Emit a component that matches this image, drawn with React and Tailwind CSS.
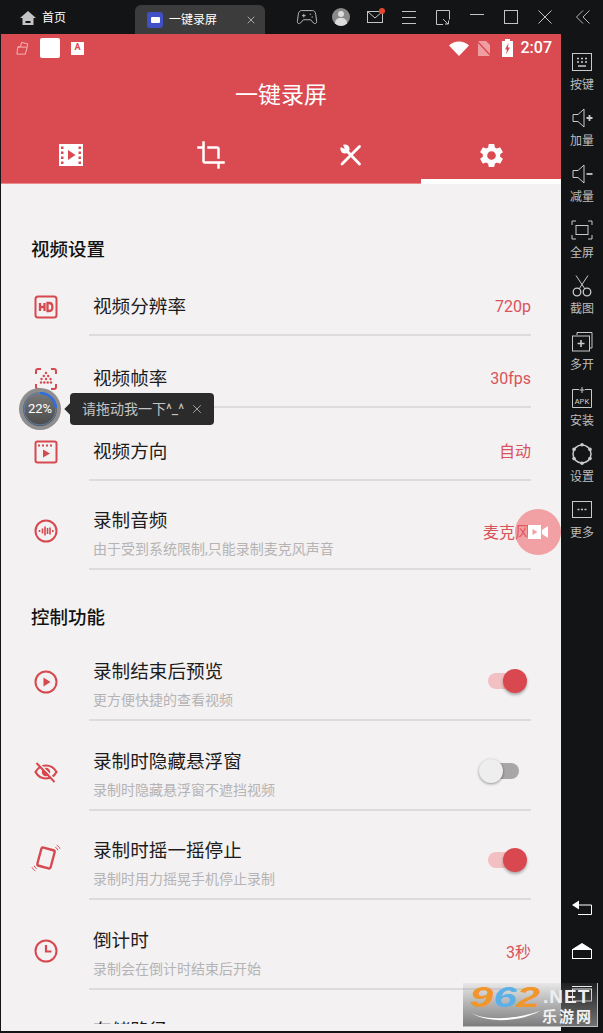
import React from "react";
import { X } from "lucide-react";

const CJK = "font-['Roboto','Noto_Sans_CJK_SC',sans-serif]";

// ── Red row icons ──────────────────────────────────────────────
const Svg = ({ children, className = "w-6 h-6" }) => (
  <svg viewBox="0 0 24 24" fill="none" stroke="#d6494f" strokeWidth="2" className={className}>
    {children}
  </svg>
);

const HdIcon = () => (
  <Svg>
    <rect x="1.500" y="1.500" width="21" height="21" rx="2.500" />
    <path d="M6 8v8M10.500 8v8M6 12h4.500" strokeWidth="2.300" />
    <path d="M13.500 8v8h1.700c2 0 3.200-1.500 3.200-4s-1.200-4-3.200-4z" strokeWidth="2.300" />
  </Svg>
);

const FpsIcon = () => (
  <Svg>
    <path d="M2 7V4a2 2 0 0 1 2-2h3M17 2h3a2 2 0 0 1 2 2v3M22 17v3a2 2 0 0 1-2 2h-3M7 22H4a2 2 0 0 1-2-2v-3" />
    <g fill="#d6494f" stroke="none">
      <circle cx="12" cy="6" r="1.200" /><circle cx="9.800" cy="9" r="1.200" /><circle cx="14.200" cy="9" r="1.200" />
      <circle cx="7.500" cy="12" r="1.200" /><circle cx="12" cy="12" r="1.200" /><circle cx="16.500" cy="12" r="1.200" />
      <circle cx="7" cy="15.500" r="1.200" /><circle cx="10.300" cy="15.500" r="1.200" /><circle cx="13.700" cy="15.500" r="1.200" /><circle cx="17" cy="15.500" r="1.200" />
    </g>
  </Svg>
);

const OrientIcon = () => (
  <Svg>
    <rect x="1.500" y="1.500" width="21" height="21" rx="2" />
    <path d="M4 5.500h16" strokeDasharray="2 2" strokeWidth="1.800" />
    <path d="M9 9.500l7 4-7 4z" fill="#d6494f" stroke="none" />
  </Svg>
);

const AudioIcon = () => (
  <Svg>
    <circle cx="12" cy="12" r="10.500" />
    <path d="M5.500 11v2M8.500 9.500v5M11 7.500v9M13.500 9v6M16 8.500v7M18.800 11v2" strokeWidth="1.600" />
  </Svg>
);

const PlayIcon = () => (
  <Svg>
    <circle cx="12" cy="12" r="10.500" />
    <path d="M9.500 7.500l7 4.500-7 4.500z" fill="#d6494f" stroke="none" />
  </Svg>
);

const EyeOffIcon = () => (
  <Svg>
    <path d="M1.500 12C4 7.500 7.500 5.500 12 5.500s8 2 10.500 6.500c-2.500 4.500-6 6.500-10.500 6.500S4 16.500 1.500 12z" strokeWidth="2.200" />
    <circle cx="12" cy="12" r="4.200" fill="#d6494f" stroke="none" />
    <path d="M3.800 2.200l18 19" strokeWidth="1.800" stroke="#f3f1f2" />
    <path d="M2.500 3l18 19" strokeWidth="2" />
  </Svg>
);

const ShakeIcon = () => (
  <Svg className="w-[30px] h-[30px]">
    <rect x="6.500" y="4.500" width="11" height="15" rx="1.500" transform="rotate(15 12 12)" strokeWidth="1.900" />
    <path d="M19.500 3.500c1 .4 1.700 1.200 2 2.300M20.500 1.800c1.300.5 2.200 1.500 2.700 2.800" strokeWidth=".8" />
    <path d="M4.500 20.500c-1-.4-1.700-1.200-2-2.300M3.500 22.200c-1.300-.5-2.200-1.500-2.700-2.800" strokeWidth=".8" />
  </Svg>
);

const ClockIcon = () => (
  <Svg>
    <circle cx="12" cy="12" r="10.500" />
    <path d="M12 6v6.500h5.500" strokeWidth="2.200" />
  </Svg>
);

// ── Header tab icons ───────────────────────────────────────────
const FilmTab = () => (
  <svg viewBox="0 0 26 24" className="w-[26px] h-[24px]" fill="#fff">
    <path
      fillRule="evenodd"
      d="M1 1h24v22H1zM3 3.500v2.500h2.500V3.500zM3 8.500V11h2.500V8.500zM3 13.500V16h2.500v-2.500zM3 18.500V21h2.500v-2.500zM20.500 3.500V6H23V3.500zM20.500 8.500V11H23V8.500zM20.500 13.500V16H23v-2.500zM20.500 18.500V21H23v-2.500zM10 7v10l7.500-5z"
    />
  </svg>
);

const CropTab = () => (
  <svg viewBox="0 0 24 24" className="w-[30px] h-[30px]" fill="#fff">
    <path d="M17 15h2V7c0-1.100-.9-2-2-2H9v2h8v8zM7 17V1H5v4H1v2h4v10c0 1.100.9 2 2 2h10v4h2v-4h4v-2H7z" />
  </svg>
);

const ToolsTab = () => (
  <svg viewBox="0 0 24 24" className="w-[24px] h-[24px]" fill="none" stroke="#fff">
    <path d="M20.500 3.500L3 21" strokeWidth="2.800" strokeLinecap="round" />
    <path d="M6.500 6.500L20.500 21" strokeWidth="2.800" strokeLinecap="round" />
    <circle cx="6" cy="6" r="4.600" fill="#fff" stroke="none" />
    <path d="M5.800 6L3.500.5.500 3.500z" fill="#d94a51" stroke="none" />
  </svg>
);

const GearTab = () => (
  <svg viewBox="0 0 24 24" className="w-[29px] h-[29px]" fill="#fff">
    <path d="M19.140 12.940c.04-.3.06-.61.06-.94 0-.32-.02-.64-.07-.94l2.030-1.580c.18-.14.23-.41.12-.61l-1.920-3.320c-.12-.22-.37-.29-.59-.22l-2.390.96c-.5-.38-1.030-.7-1.620-.94l-.36-2.540c-.04-.24-.24-.41-.48-.41h-3.840c-.24 0-.43.17-.47.41l-.36 2.540c-.59.24-1.130.57-1.620.94l-2.390-.96c-.22-.08-.47 0-.59.22L2.740 8.870c-.12.21-.08.47.12.61l2.030 1.580c-.05.3-.09.63-.09.94s.02.64.07.94l-2.030 1.580c-.18.14-.23.41-.12.61l1.920 3.320c.12.22.37.29.59.22l2.390-.96c.5.38 1.030.7 1.620.94l.36 2.540c.05.24.24.41.48.41h3.840c.24 0 .44-.17.47-.41l.36-2.540c.59-.24 1.130-.56 1.620-.94l2.390.96c.22.08.47 0 .59-.22l1.920-3.320c.12-.22.07-.47-.12-.61l-2.010-1.580zM12 15.600c-1.980 0-3.600-1.620-3.600-3.600s1.620-3.600 3.600-3.600 3.600 1.620 3.600 3.600-1.620 3.600-3.600 3.600z" />
  </svg>
);

// ── Emulator sidebar icons ─────────────────────────────────────
const SideSvg = ({ children }) => (
  <svg viewBox="0 0 24 24" fill="none" stroke="#c9c9c9" strokeWidth="1" className="w-6 h-6">
    {children}
  </svg>
);

const sideItems = [
  {
    label: "按键",
    icon: (
      <>
        <rect x="2.500" y="3.500" width="19" height="17" />
        <path d="M7 8.500h2M11 8.500h2M15 8.500h2M7 12h2M11 12h2M15 12h2M8 16h8" strokeWidth="1.500" />
      </>
    ),
  },
  {
    label: "加量",
    icon: (
      <>
        <path d="M3 8.500h5L14 3v18l-6-5.500H3z" />
        <path d="M16.500 12h6M19.500 9v6" strokeWidth="1.800" />
      </>
    ),
  },
  {
    label: "减量",
    icon: (
      <>
        <path d="M3 8.500h5L14 3v18l-6-5.500H3z" />
        <path d="M16.500 12h6" strokeWidth="1.800" />
      </>
    ),
  },
  {
    label: "全屏",
    icon: (
      <>
        <path d="M2 7V3h4M18 3h4v4M22 17v4h-4M6 21H2v-4" />
        <rect x="6" y="7.500" width="12" height="9" />
      </>
    ),
  },
  {
    label: "截图",
    icon: (
      <>
        <circle cx="7" cy="18" r="3.800" strokeWidth="1.300" />
        <circle cx="17" cy="18" r="3.800" strokeWidth="1.300" />
        <path d="M9 15L18 1.500M15 15L6 1.500" />
      </>
    ),
  },
  {
    label: "多开",
    icon: (
      <>
        <path d="M7 5V2.500h15V18h-2" />
        <rect x="2.500" y="6" width="17" height="15" />
        <path d="M7.500 13.500h7M11 10v7" strokeWidth="1.600" />
      </>
    ),
  },
  {
    label: "安装",
    icon: (
      <>
        <path d="M9 3.500H2.500v18h19v-18H15" />
        <path d="M12 1v6M9.500 4h5" />
        <text x="12" y="18" textAnchor="middle" fontSize="8" fill="#c9c9c9" stroke="none" fontFamily="Liberation Mono">
          APK
        </text>
      </>
    ),
  },
  {
    label: "设置",
    icon: (
      <>
        <circle cx="12" cy="12" r="9" strokeWidth="1.500" />
        <g fill="#c9c9c9" stroke="none">
          <circle cx="12" cy="2.800" r="1.800" />
          <circle cx="12" cy="21.200" r="1.800" />
          <circle cx="4" cy="7.400" r="1.800" />
          <circle cx="20" cy="7.400" r="1.800" />
          <circle cx="4" cy="16.600" r="1.800" />
          <circle cx="20" cy="16.600" r="1.800" />
        </g>
      </>
    ),
  },
  {
    label: "更多",
    icon: (
      <>
        <rect x="2.500" y="3.500" width="19" height="16" />
        <path d="M7.500 11.500h2M11 11.500h2M14.500 11.500h2" strokeWidth="1.500" />
      </>
    ),
  },
];

// ── Title bar buttons, 34px pitch ──────────────────────────────
const barIcons = [
  <svg key="game" viewBox="0 0 24 24" className="w-[22px] h-[22px]" fill="none" stroke="#c4c4c4" strokeWidth="1">
    <path d="M6 5h12c2 0 3 1.500 3.500 4l1 8c.2 2-2 3-3.500 1.500L16 15H8l-3 3.500C3.500 20 1.300 19 1.500 17l1-8C3 6.500 4 5 6 5z" />
    <path d="M6.500 10.500h4M8.500 8.500v4M15 9h1.500M17 12h1.500" />
  </svg>,
  <div key="user" className="relative w-[18px] h-[18px] rounded-full bg-[#8a8a8a] overflow-hidden">
    <div className="absolute left-[6px] top-[3px] w-[6px] h-[6px] rounded-full bg-[#dcdcdc]" />
    <div className="absolute left-[3px] top-[10px] w-[12px] h-[10px] rounded-full bg-[#dcdcdc]" />
  </div>,
  <div key="mail" className="relative">
    <svg viewBox="0 0 16 12" className="w-[16px] h-[12px] block" fill="none" stroke="#c4c4c4" strokeWidth="1">
      <rect x=".5" y=".5" width="15" height="11" />
      <path d="M.5.500L8 7l7.500-6.500" />
    </svg>
    <div className="absolute -right-[2px] -top-[3px] w-[6px] h-[6px] rounded-full bg-[#e5482d]" />
  </div>,
  <svg key="menu" viewBox="0 0 14 13" className="w-[14px] h-[13px]" stroke="#c4c4c4" strokeWidth="1">
    <path d="M0 .5h14M0 6.500h14M0 12.500h14" />
  </svg>,
  <svg key="rotate" viewBox="0 0 14 15" className="w-[14px] h-[15px]" fill="none" stroke="#c4c4c4" strokeWidth="1">
    <path d="M7 14.500H.5V.5h13v9M7 9l5 5M12.500 10.500V14H9" />
  </svg>,
  <svg key="min" viewBox="0 0 14 14" className="w-[14px] h-[14px]" stroke="#c4c4c4" strokeWidth="1">
    <path d="M0 4.500h14" />
  </svg>,
  <svg key="max" viewBox="0 0 14 14" className="w-[14px] h-[14px]" fill="none" stroke="#c4c4c4" strokeWidth="1">
    <rect x=".5" y=".5" width="13" height="13" />
  </svg>,
  <svg key="close" viewBox="0 0 14 14" className="w-[14px] h-[14px]" stroke="#c4c4c4" strokeWidth="1">
    <path d="M.5.500l13 13M13.500.5l-13 13" />
  </svg>,
];

// ── Row ────────────────────────────────────────────────────────
function Switch({ on }) {
  if (on) {
    return (
      <div className="relative w-[43px] h-[24px] mb-[6px] flex items-center">
        <div className="w-[30px] h-[16px] rounded-full bg-[#f2bfc2]" />
        <div className="absolute right-[4px] w-[24px] h-[24px] rounded-full bg-[#d9474f] shadow-[0_2px_3px_rgba(0,0,0,0.3)]" />
      </div>
    );
  }
  return (
    <div className="relative w-[40px] h-[24px] mb-[6px] flex items-center justify-end mr-[12px]">
      <div className="w-[28px] h-[16px] rounded-full bg-[#a8a6a7]" />
      <div className="absolute left-0 w-[24px] h-[24px] rounded-full bg-[#eeeeee] shadow-[0_1px_3px_rgba(0,0,0,0.4)]" />
    </div>
  );
}

function Row({ icon, title, sub, value, toggle }) {
  return (
    <div className={`flex items-end ${sub ? "h-[89.7px]" : "h-[72.5px]"}`}>
      <div className={`w-[88px] flex justify-center pl-[1px] ${sub ? "mb-[27px]" : "mb-[17px]"}`}>{icon}</div>
      <div className={`flex-1 mr-[30px] flex items-center justify-between border-b-2 border-[#dddbdc] pl-[4px] ${sub ? "pb-[10px]" : "pb-[14px]"}`}>
        <div className="flex flex-col gap-[6px]">
          <div className="text-[18.6px] leading-[26px] text-[#1c1c1c]">{title}</div>
          {sub && <div className="text-[14px] leading-[18px] text-[#b5b3b4]">{sub}</div>}
        </div>
        {value && <div className="text-[16px] leading-[24px] text-[#d9535a]">{value}</div>}
        {toggle && <Switch on={toggle === "on"} />}
      </div>
    </div>
  );
}

const SectionTitle = ({ children, className }) => (
  <div className={`pl-[30px] text-[18.5px] leading-[25px] font-medium text-[#111] ${className}`}>{children}</div>
);

export default function App() {
  return (
    <div className={`relative w-[603px] h-[1033px] bg-[#131416] overflow-hidden flex flex-col ${CJK}`}>
      {/* Emulator title bar */}
      <div className="h-[34px] flex items-stretch text-white shrink-0">
        <div className="w-[135px] flex items-center pl-[20px] gap-[6px] pt-[1px]">
          <svg viewBox="0 0 16 14" className="w-[16px] h-[14px]">
            <path fillRule="evenodd" d="M8 0L0 7h2.500v7h11V7H16zM5.500 10v2h5v-2z" fill="#c4c4c4" />
          </svg>
          <span className="text-[12px]">首页</span>
        </div>
        <div className="w-[130px] mt-[5px] bg-[#3c3c3c] rounded-t-[6px] flex items-center pl-[12px] pr-[8px]">
          <div className="w-[16px] h-[16px] rounded-[3px] bg-[#3f51c4] flex items-center justify-center">
            <div className="w-[9px] h-[6px] bg-white rounded-[1px]" />
          </div>
          <span className="ml-[6px] text-[12px] flex-1">一键录屏</span>
          <X size={12} stroke="#a8a8a8" />
        </div>
        <div className="flex-1 flex items-center pl-[25px]">
          {barIcons.map((icon) => (
            <div key={icon.key} className="w-[34px] flex justify-center">{icon}</div>
          ))}
          <div className="flex-1 flex justify-center">
            <svg viewBox="0 0 14 14" className="w-[14px] h-[14px]" fill="none" stroke="#b5b5b5" strokeWidth="1">
              <path d="M7 .5L.5 7 7 13.500M13.500.5L7 7l6.500 6.500" />
            </svg>
          </div>
        </div>
      </div>

      <div className="flex-1 flex min-h-0 pl-px pb-[2px]">
        {/* Phone screen */}
        <div className="w-[560px] flex flex-col bg-[#f3f1f2]">
          <div className="bg-[#d94a51] shrink-0 h-[150px] flex flex-col border-b border-[#e98a8f]">
            <div className="h-[28px] flex items-center pl-[14px] pr-[9px] text-white">
              <svg viewBox="0 0 16 16" className="w-[15px] h-[15px]" fill="none" stroke="#f5bcbf" strokeWidth="1">
                <path d="M3 6.500l3-1L7 1.500l6.500 1.500-.5 3.500L11 14H2z" />
                <path d="M3 6.500h9.500" />
              </svg>
              <div className="ml-[10px] w-[20px] h-[20px] rounded-[2px] bg-white" />
              <div className="ml-[11px] w-[13px] h-[13px] bg-white flex items-start justify-center text-[9px] leading-[11px] font-bold text-[#d94a51]">A</div>
              <div className="flex-1" />
              <svg viewBox="0 0 20 15" className="w-[20px] h-[15px]" fill="#fff">
                <path d="M0 4.500C5.500-1 14.500-1 20 4.500L10 15z" />
              </svg>
              <svg viewBox="0 0 14 17" className="ml-[8px] w-[14px] h-[17px]">
                <path d="M1 1h8l4 4v11H1z" fill="#ee9da1" />
                <path d="M0 1l14 15" stroke="#d94a51" strokeWidth="1.500" />
              </svg>
              <svg viewBox="0 0 11 18" className="ml-[11px] w-[11px] h-[18px]">
                <path d="M3 2V0h5v2h3v16H0V2z" fill="#fff" />
                <path d="M6.500 4L3 10.500h2L4 15.500l4-7H6z" fill="#d94a51" />
              </svg>
              <span className="ml-[8px] text-[16px] font-medium font-['Roboto'] leading-none">2:07</span>
            </div>
            <div className="h-[66px] flex items-center justify-center text-[23px] text-white pt-[3px]">一键录屏</div>
            <div className="flex-1 grid grid-cols-4">
              <div className="flex items-center justify-center pb-[1px]"><FilmTab /></div>
              <div className="flex items-center justify-center pb-[1px]"><CropTab /></div>
              <div className="flex items-center justify-center pb-[1px]"><ToolsTab /></div>
              <div className="relative flex items-center justify-center pb-[1px]">
                <GearTab />
                <div className="absolute left-0 right-0 -bottom-px h-[5px] bg-white" />
              </div>
            </div>
          </div>

          {/* Settings list */}
          <div className="flex-1 min-h-0 overflow-hidden">
            <SectionTitle className="pt-[54px]">视频设置</SectionTitle>
            <Row icon={<HdIcon />} title="视频分辨率" value="720p" />
            <Row icon={<FpsIcon />} title="视频帧率" value="30fps" />
            <Row icon={<OrientIcon />} title="视频方向" value="自动" />
            <Row icon={<AudioIcon />} title="录制音频" sub="由于受到系统限制,只能录制麦克风声音" value="麦克风" />
            <SectionTitle className="pt-[36px]">控制功能</SectionTitle>
            <Row icon={<PlayIcon />} title="录制结束后预览" sub="更方便快捷的查看视频" toggle="on" />
            <Row icon={<EyeOffIcon />} title="录制时隐藏悬浮窗" sub="录制时隐藏悬浮窗不遮挡视频" toggle="off" />
            <Row icon={<ShakeIcon />} title="录制时摇一摇停止" sub="录制时用力摇晃手机停止录制" toggle="on" />
            <Row icon={<ClockIcon />} title="倒计时" sub="录制会在倒计时结束后开始" value="3秒" />
            {/* only the top of this row's title is visible in the viewport */}
            <div className="pl-[92px] pt-[28px] text-[18.6px] leading-[26px] text-[#1c1c1c]">存储路径</div>
          </div>
          <div className="h-[7px] shrink-0" />
        </div>

        {/* Emulator sidebar */}
        <div className="flex-1 flex flex-col items-center pt-[16px]">
          {sideItems.map((item) => (
            <div key={item.label} className="h-[56px] flex flex-col items-center shrink-0">
              <SideSvg>{item.icon}</SideSvg>
              <span className="mt-[3px] text-[12px] leading-[16px] text-[#bdbdbd]">{item.label}</span>
            </div>
          ))}
          <div className="flex-1" />
          <div className="flex flex-col items-center gap-[27px] pb-[29px]">
            <svg viewBox="0 0 20 16" className="w-[20px] h-[16px]" fill="none" stroke="#fff">
              <path d="M0 5l7-4.500v9z" fill="#fff" stroke="none" />
              <path d="M6 5h13.500v9.500H6" />
            </svg>
            <svg viewBox="0 0 20 16" className="w-[20px] h-[16px]" fill="none" stroke="#fff">
              <path d="M.5 6.500L10 .5l9.500 6z" fill="#fff" />
              <rect x=".5" y="6.500" width="19" height="9" />
            </svg>
            <svg viewBox="0 0 20 16" className="w-[20px] h-[16px]" fill="none" stroke="#fff">
              <rect x=".5" y="3" width="19" height="12" />
              <path d="M0 .5h20" />
            </svg>
          </div>
        </div>
      </div>

      {/* Floating record progress + tooltip */}
      <div className="absolute left-[19px] top-[388px] w-[42px] h-[42px] rounded-full bg-[#8e8e8e] flex items-center justify-center">
        <div className="relative w-[34px] h-[34px] rounded-full bg-gradient-to-b from-[#7a7a7a] to-[#4a4a4a] flex items-center justify-center text-[13px] text-white font-['Roboto']">
          <svg viewBox="0 0 34 34" className="absolute inset-0 w-[34px] h-[34px]" fill="none">
            <circle cx="17" cy="17" r="16" stroke="#5f7fae" strokeWidth="1" />
            <path d="M17 1a16 16 0 0 1 16 15" stroke="#2f6fe0" strokeWidth="2.500" />
          </svg>
          22%
        </div>
      </div>
      <div className="absolute left-[70px] top-[393px] w-[144px] h-[32px] rounded-[4px] bg-[#2b2b2b] flex items-center pl-[12px] pr-[10px] text-[14px] text-[#c4c4c4]">
        <div className="absolute -left-[4px] top-[12px] w-[8px] h-[8px] rotate-45 bg-[#2b2b2b]" />
        <span className="flex-1 whitespace-nowrap">请拖动我一下^_^</span>
        <X size={14} stroke="#b5b5b5" strokeWidth={1.500} />
      </div>

      {/* Floating record button */}
      <div className="absolute left-[515px] top-[509px] w-[46px] h-[46px] rounded-full bg-[#ee5d64]/55 flex items-center justify-center">
        <svg viewBox="0 0 20 14" className="w-[20px] h-[14px]" fill="#fff">
          <path fillRule="evenodd" d="M0 0h13v14H0zM4.500 4v6l5-3zM14 5l6-4v12l-6-4z" />
        </svg>
      </div>

      {/* Watermark */}
      <div className="absolute left-[463px] top-[983px] w-[135px] h-[44px] bg-gradient-to-b from-[#888]/10 to-[#777]/95 border-r border-b border-[#bbb] flex">
        <div className="w-[78px] shrink-0 pl-[7px] flex flex-col">
          <div className="flex origin-left scale-x-[1.4] italic font-bold font-['Liberation_Sans'] text-[30px] leading-[27px]">
            <span className="text-[#f0962c]">9</span>
            <span className="text-[#5cb0e8]">6</span>
            <span className="text-[#f0962c]">2</span>
          </div>
          <svg viewBox="0 0 70 12" className="w-[70px] h-[12px]" fill="#fff">
            <path d="M0 2c12 8 40 9 70-1-22 12-56 12-70 1z" />
          </svg>
        </div>
        <div className="flex-1 flex flex-col font-bold">
          <div className="pt-[3px] pl-[2px] text-[19px] leading-[22px] tracking-[1px] whitespace-nowrap font-['Liberation_Sans'] text-[#eeeeee]">.NET</div>
          <div className="text-[15px] leading-[18px] tracking-[2px] whitespace-nowrap pl-[1px] text-[#f2f2f2]">乐游网</div>
        </div>
      </div>
    </div>
  );
}
